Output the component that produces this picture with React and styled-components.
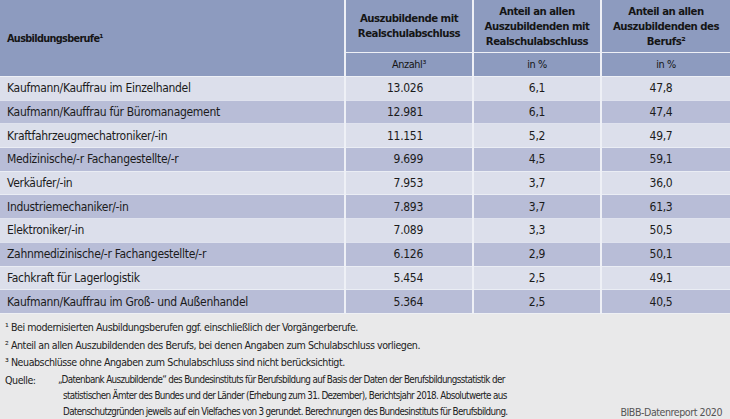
import React from "react";
import styled, { createGlobalStyle } from "styled-components";

const Global = createGlobalStyle`
  html, body { margin: 0; padding: 0; background: #e9e9ea; }
  body { font-family: "Liberation Sans Narrow", "DejaVu Sans Condensed", "Liberation Sans", sans-serif; color: #1b1b1b; }
`;

const Page = styled.div`
  width: 730px;
  height: 419px;
  overflow: hidden;
  background: #e9e9ea;
`;

const Table = styled.table`
  width: 730px;
  border-collapse: collapse;
  table-layout: fixed;
  font-size: 12px;
  letter-spacing: -0.3px;
`;

const HeadCell = styled.th`
  background: #8d9bbf;
  font-size: ${(p) => (p.$sub || p.$left ? "10.8px" : "11.3px")};
  font-weight: ${(p) => (p.$sub ? "normal" : "bold")};
  letter-spacing: ${(p) => (p.$sub ? "-0.4px" : p.$left ? "-0.65px" : "-0.5px")};
  text-align: ${(p) => (p.$left ? "left" : "center")};
  vertical-align: middle;
  line-height: 15px;
  padding: ${(p) => (p.$left ? "0 7px" : "0 2px")};
  height: ${(p) => (p.$sub ? "23px" : "52px")};
  border-left: ${(p) => (p.$left ? "none" : "2px solid #eef0f6")};
  border-bottom: 1px solid #eef0f6;
  color: #151515;
  white-space: nowrap;
`;

const Row = styled.tr`
  background: ${(p) => (p.$dark ? "#b8bdd7" : "#dcdfeb")};
  height: 23.7px;
`;

const alignFor = { name: "left", num: "right", mid: "center", end: "center" };
const padFor = { name: "0 7px", num: "0 49px 0 0", mid: "0", end: "0 10px 0 0" };

const Cell = styled.td`
  padding: ${(p) => padFor[p.$kind]};
  text-align: ${(p) => alignFor[p.$kind]};
  border-left: ${(p) => (p.$kind === "name" ? "none" : "2px solid #eef0f6")};
  border-bottom: 1px solid rgba(240, 242, 248, 0.7);
  white-space: nowrap;
`;

const Notes = styled.div`
  padding: 5px 8px 0 5px;
  font-size: 10.6px;
  letter-spacing: -0.45px;
  line-height: 17.8px;
  color: #222;
`;

const Note = styled.div`
  white-space: nowrap;
`;

const Source = styled.div`
  display: grid;
  grid-template-columns: 53px 1fr auto;
  align-items: start;
  line-height: 16px;
`;

const Label = styled.div``;

const SourceText = styled.div`
  padding-left: 5px;
  text-indent: -5px;
  white-space: nowrap;
  font-size: 9.8px;
  letter-spacing: -0.65px;
`;

const Credit = styled.div`
  align-self: end;
  color: #555;
`;

const rows = [
  ["Kaufmann/Kauffrau im Einzelhandel", "13.026", "6,1", "47,8"],
  ["Kaufmann/Kauffrau für Büromanagement", "12.981", "6,1", "47,4"],
  ["Kraftfahrzeugmechatroniker/-in", "11.151", "5,2", "49,7"],
  ["Medizinische/-r Fachangestellte/-r", "9.699", "4,5", "59,1"],
  ["Verkäufer/-in", "7.953", "3,7", "36,0"],
  ["Industriemechaniker/-in", "7.893", "3,7", "61,3"],
  ["Elektroniker/-in", "7.089", "3,3", "50,5"],
  ["Zahnmedizinische/-r Fachangestellte/-r", "6.126", "2,9", "50,1"],
  ["Fachkraft für Lagerlogistik", "5.454", "2,5", "49,1"],
  ["Kaufmann/Kauffrau im Groß- und Außenhandel", "5.364", "2,5", "40,5"],
];

export default function App() {
  return (
    <Page>
      <Global />
      <Table>
        <colgroup>
          <col style={{ width: 345 }} />
          <col style={{ width: 128 }} />
          <col style={{ width: 128 }} />
          <col style={{ width: 129 }} />
        </colgroup>
        <thead>
          <tr>
            <HeadCell $left rowSpan={2}>Ausbildungsberufe¹</HeadCell>
            <HeadCell>Auszubildende mit<br />Realschulabschluss</HeadCell>
            <HeadCell>Anteil an allen<br />Auszubildenden mit<br />Realschulabschluss</HeadCell>
            <HeadCell>Anteil an allen<br />Auszubildenden des<br />Berufs²</HeadCell>
          </tr>
          <tr>
            <HeadCell $sub>Anzahl³</HeadCell>
            <HeadCell $sub>in %</HeadCell>
            <HeadCell $sub>in %</HeadCell>
          </tr>
        </thead>
        <tbody>
          {rows.map((r, i) => (
            <Row key={r[0]} $dark={i % 2 === 1}>
              <Cell $kind="name">{r[0]}</Cell>
              <Cell $kind="num">{r[1]}</Cell>
              <Cell $kind="mid">{r[2]}</Cell>
              <Cell $kind="end">{r[3]}</Cell>
            </Row>
          ))}
        </tbody>
      </Table>
      <Notes>
        <Note>¹ Bei modernisierten Ausbildungsberufen ggf. einschließlich der Vorgängerberufe.</Note>
        <Note>² Anteil an allen Auszubildenden des Berufs, bei denen Angaben zum Schulabschluss vorliegen.</Note>
        <Note>³ Neuabschlüsse ohne Angaben zum Schulabschluss sind nicht berücksichtigt.</Note>
        <Source>
          <Label>Quelle:</Label>
          <SourceText>
            „Datenbank Auszubildende“ des Bundesinstituts für Berufsbildung auf Basis der Daten der Berufsbildungsstatistik der<br />
            statistischen Ämter des Bundes und der Länder (Erhebung zum 31. Dezember), Berichtsjahr 2018. Absolutwerte aus<br />
            Datenschutzgründen jeweils auf ein Vielfaches von 3 gerundet. Berechnungen des Bundesinstituts für Berufsbildung.
          </SourceText>
          <Credit>BIBB-Datenreport 2020</Credit>
        </Source>
      </Notes>
    </Page>
  );
}
